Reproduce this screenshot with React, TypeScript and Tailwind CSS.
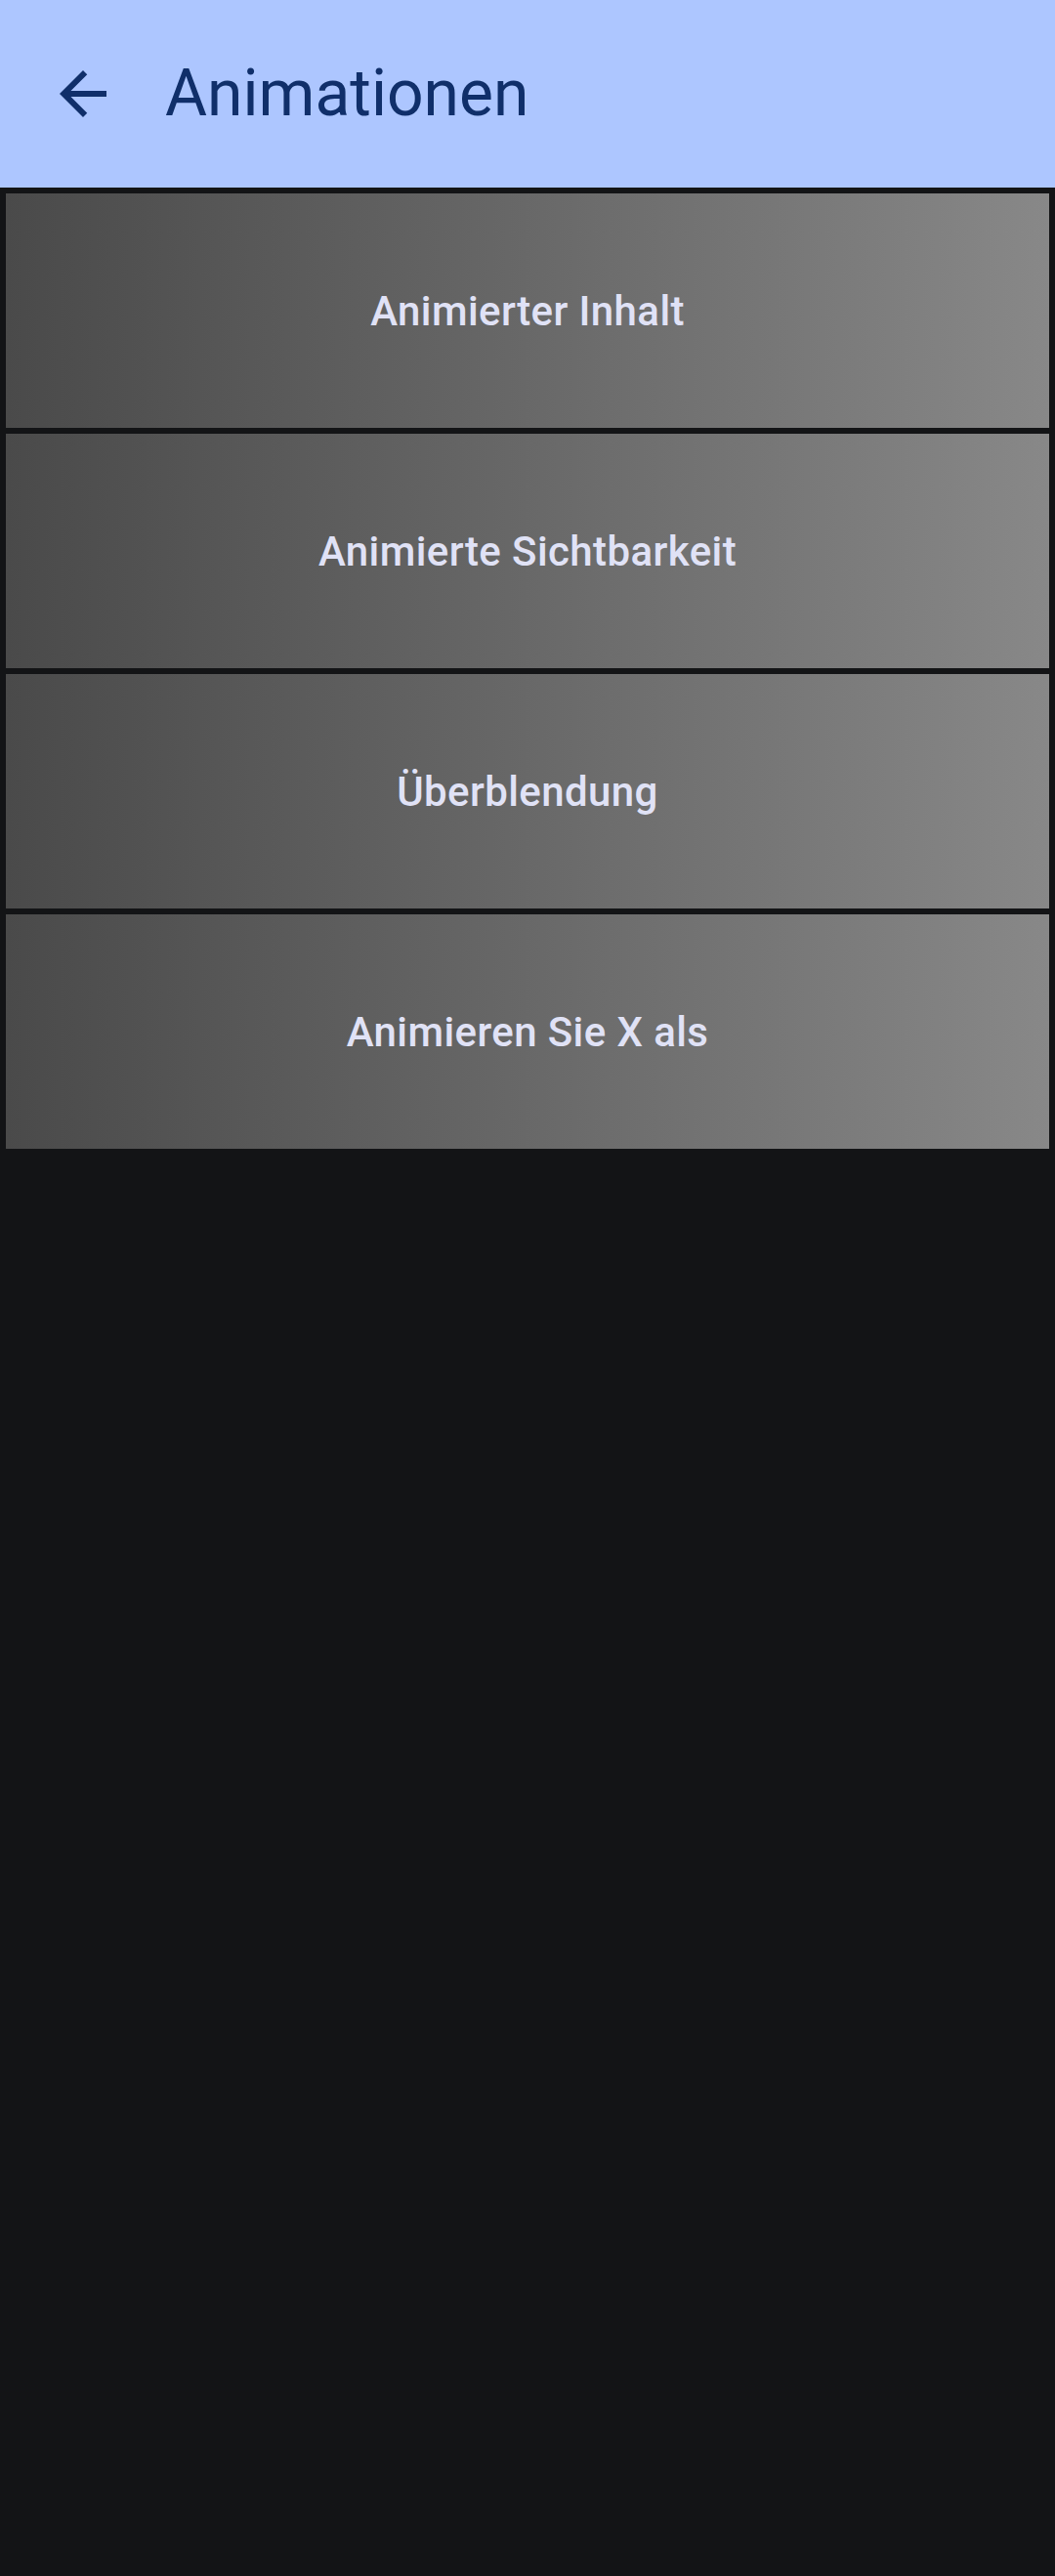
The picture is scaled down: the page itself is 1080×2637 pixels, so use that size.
const ITEMS = ["Animierter Inhalt", "Animierte Sichtbarkeit", "Überblendung", "Animieren Sie X als"];

export default function App() {
  return (
    <div
      className="min-h-[2637px] w-[1080px] bg-[#131416]"
      style={{ fontFamily: "Roboto, 'Noto Sans', sans-serif" }}
    >
      <header className="flex h-[192px] items-center bg-[#adc6ff]">
        <button className="ml-[49px] flex h-[72px] w-[72px] items-center justify-center">
          <svg width="72" height="72" viewBox="0 0 24 24" fill="#102f6a">
            <path d="M20 11H7.83l5.59-5.59L12 4l-8 8 8 8 1.41-1.41L7.83 13H20v-2z" />
          </svg>
        </button>
        <h1 className="ml-[48px] text-[66px] font-normal leading-none text-[#102f6a]">Animationen</h1>
      </header>

      <div className="flex flex-col gap-[6px] px-[6px] pt-[6px]">
        {ITEMS.map((label) => (
          <div
            key={label}
            className="flex h-[240px] items-center justify-center bg-gradient-to-r from-[#4a4a4a] to-[#888888]"
          >
            <span className="text-[42px] font-medium tracking-[0.4px] text-[#e0e2f6]">{label}</span>
          </div>
        ))}
      </div>
    </div>
  );
}
